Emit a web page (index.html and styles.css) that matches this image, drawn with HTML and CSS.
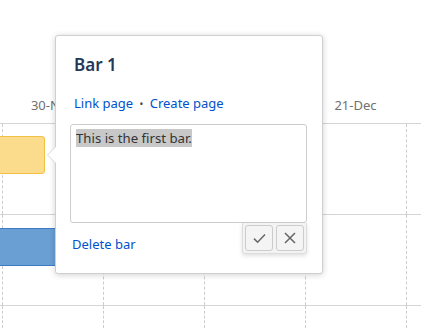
FILE: index.html
```html
<!DOCTYPE html>
<html lang="en">
<head>
    <meta charset="UTF-8">
    <title>Timeline</title>
    <link rel="stylesheet" href="styles.css">
</head>
<body>
    <div class="timeline">
        <div class="scale">
            <div class="label">30-Nov</div>
            <div class="label"></div>
            <div class="label"></div>
            <div class="label">21-Dec</div>
        </div>
        <div class="row">
            <div class="cell"></div><div class="cell"></div><div class="cell"></div><div class="cell"></div><div class="cell"></div>
            <div class="bar bar-yellow"></div>
        </div>
        <div class="row">
            <div class="cell"></div><div class="cell"></div><div class="cell"></div><div class="cell"></div><div class="cell"></div>
            <div class="bar bar-blue"></div>
        </div>
        <div class="row last">
            <div class="cell"></div><div class="cell"></div><div class="cell"></div><div class="cell"></div><div class="cell"></div>
        </div>
    </div>

    <div class="popup">
        <h3 class="popup-title">Bar 1</h3>
        <div class="popup-links">
            <a href="#">Link page</a>
            <span class="dot">&bull;</span>
            <a href="#">Create page</a>
        </div>
        <div class="note"><span class="sel">This is the first bar.</span></div>
        <div class="popup-foot">
            <a href="#" class="delete">Delete bar</a>
            <div class="btn-group">
                <button class="icon-btn" title="Save">
                    <svg width="13" height="11" viewBox="0 0 13 11"><path d="M1 5.6 L4.6 9.2 L12 1.6" fill="none" stroke="#666" stroke-width="1.5"/></svg>
                </button>
                <button class="icon-btn" title="Cancel">
                    <svg width="12" height="12" viewBox="0 0 12 12"><path d="M1 1 L11 11 M11 1 L1 11" fill="none" stroke="#666" stroke-width="1.5"/></svg>
                </button>
            </div>
        </div>
    </div>
</body>
</html>
```

FILE: styles.css
```css
body {
    margin: 0;
    padding: 0;
    font-family: "Noto Sans", "Open Sans", sans-serif;
    background: #ffffff;
    overflow: hidden;
    height: 328px;
}
.timeline {
    width: 421px;
    overflow: hidden;
}
.scale {
    display: flex;
    align-items: flex-end;
    height: 123px;
    padding-left: 2px;
    box-sizing: border-box;
    padding-bottom: 9px;
}
.label {
    flex: 0 0 101px;
    text-align: center;
    font-size: 13px;
    color: #707070;
}
.row {
    position: relative;
    display: flex;
    height: 91px;
    box-sizing: border-box;
    border-top: 1px solid #d4d4d4;
    padding-left: 2px;
}
.row.last {
    height: 23px;
}
.cell {
    flex: 0 0 101px;
    box-sizing: border-box;
    border-left: 1px dashed #cccccc;
}
.bar {
    position: absolute;
    left: -4px;
    border-radius: 3px;
    box-sizing: border-box;
}
.bar-yellow {
    top: 12px;
    width: 49px;
    height: 38px;
    background: #fbdb8c;
    border: 1px solid #f2c141;
}
.bar-blue {
    top: 13px;
    width: 70px;
    height: 38px;
    background: #699fd3;
    border: 1px solid #3d7cc4;
    border-radius: 0;
}

.popup {
    position: absolute;
    left: 55px;
    top: 35px;
    width: 268px;
    height: 239px;
    box-sizing: border-box;
    background: #ffffff;
    border: 1px solid #cfcfcf;
    border-radius: 3px;
    box-shadow: 0 1px 6px rgba(0, 0, 0, 0.18);
    padding: 17px 15px 0 14px;
}
.popup::before,
.popup::after {
    content: "";
    position: absolute;
    top: 110px;
    border-style: solid;
    border-color: transparent;
}
.popup::before {
    left: -9px;
    border-width: 9px 9px 9px 0;
    border-right-color: #d6d6d6;
}
.popup::after {
    left: -8px;
    border-width: 9px 9px 9px 0;
    border-right-color: #ffffff;
}
.popup-title {
    margin: 0 0 0 4px;
    font-size: 17px;
    font-weight: 600;
    color: #253858;
    line-height: 24px;
}
.popup-links {
    margin: 17px 0 0 4px;
    font-size: 13px;
    line-height: 18px;
}
.popup-links a,
.delete {
    color: #0052cc;
    text-decoration: none;
}
.dot {
    color: #444;
    font-size: 10px;
    margin: 0 3px;
}
.note {
    margin-top: 11px;
    height: 99px;
    box-sizing: border-box;
    border: 1px solid #cccccc;
    border-radius: 3px;
    padding: 5px 5px;
    font-size: 13.2px;
    line-height: 17px;
    color: #333333;
}
.sel {
    background: #c8c8c8;
}
.popup-foot {
    display: flex;
    justify-content: space-between;
    align-items: flex-start;
}
.delete {
    font-size: 13px;
    margin: 12px 0 0 2px;
}
.btn-group {
    display: flex;
    gap: 3px;
    padding: 2px;
    background: #f3f3f3;
    border: 1px solid #dddddd;
    border-top: none;
    border-radius: 0 0 3px 3px;
    box-shadow: 0 2px 4px rgba(0, 0, 0, 0.12);
}
.icon-btn {
    width: 28px;
    height: 26px;
    padding: 0;
    display: flex;
    align-items: center;
    justify-content: center;
    background: #f4f4f4;
    border: 1px solid #cccccc;
    border-radius: 3px;
    cursor: pointer;
}
```
